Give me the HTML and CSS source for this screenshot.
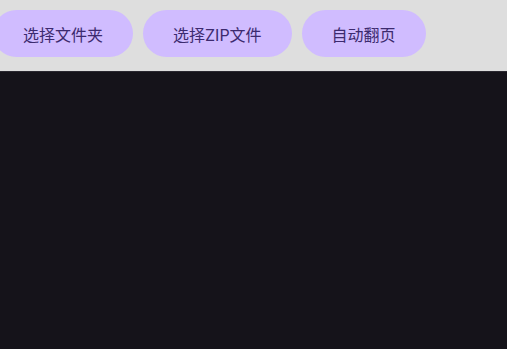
FILE: index.html
```html
<!DOCTYPE html>
<html lang="zh">
<head>
  <meta charset="UTF-8" />
  <meta name="viewport" content="width=device-width, initial-scale=1.0">
  <title>阅读器</title>
  <link rel="stylesheet" href="styles.css">
</head>
<body>
  <div class="toolbar">
    <button class="tool-btn first">选择文件夹</button>
    <button class="tool-btn">选择ZIP文件</button>
    <button class="tool-btn">自动翻页</button>
  </div>
  <div class="viewer"></div>
</body>
</html>
```

FILE: styles.css
```css
html, body { margin: 0; height: 100%; }
body { display: flex; flex-direction: column; background: #15131a; font-family: Inter, "Noto Sans CJK SC", sans-serif; overflow: hidden; }
.toolbar { display: flex; gap: 10px; align-items: flex-start; box-sizing: border-box; height: 72px; padding-top: 10px; background: #dedede; border-bottom: 1px solid #2a2830; flex-shrink: 0; }
.tool-btn { height: 47px; padding: 0 30px; border: none; border-radius: 24px; background: #d0bcff; color: #3c2a6e; font-family: inherit; font-size: 16px; cursor: pointer; white-space: nowrap; }
.tool-btn.first { margin-left: -7px; }
.viewer { flex: 1; background: #15131a; }
```
